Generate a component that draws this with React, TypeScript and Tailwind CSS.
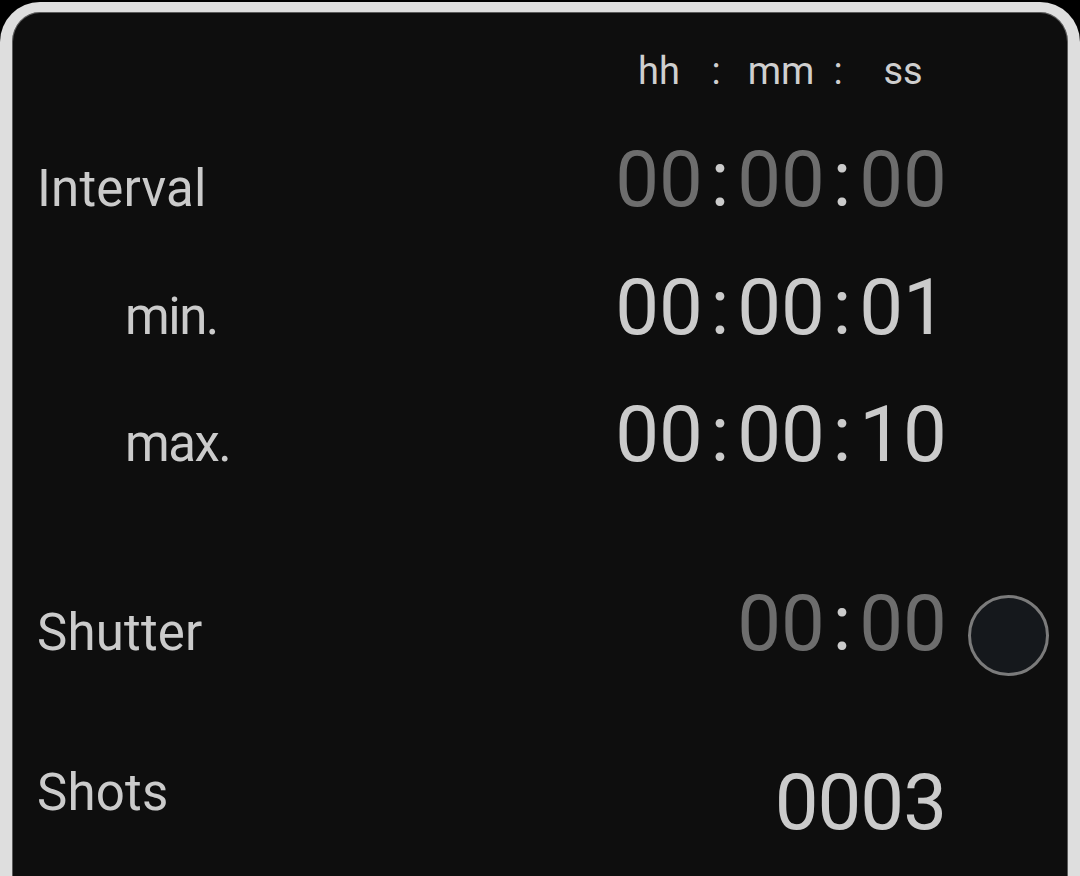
import { Fragment } from 'react';

const LABEL = 'text-[51px] text-[#cbcbcb]';
const BRIGHT = 'text-[#cbcbcb]';
const DIM = 'text-[#6d6d6d]';

function Clock({ parts, dim }: { parts: string[]; dim?: boolean }) {
  return (
    <div className="flex w-[332px] justify-end text-[78px] leading-[100px]">
      {parts.map((p, i) => (
        <Fragment key={i}>
          {i > 0 && <span className={`w-[34px] text-center ${BRIGHT}`}>:</span>}
          <span className={`w-[88px] text-center ${dim ? DIM : BRIGHT}`}>{p}</span>
        </Fragment>
      ))}
    </div>
  );
}

export default function App() {
  return (
    <div
      className="h-[876px] w-[1080px] overflow-hidden bg-black pt-[2px]"
      style={{ fontFamily: 'Roboto, "Open Sans", sans-serif' }}
    >
      <div className="h-[920px] rounded-t-[40px] border-x-[12px] border-t-[10px] border-[#dedede] bg-[#0e0e0e] shadow-[inset_0_0_0_1px_#5c5c5c]">
        {/* column header */}
        <div className="flex h-[118px] items-center">
          <div className="flex-1" />
          <div className="flex w-[332px] text-[38px] text-[#cfcfcf]">
            <span className="w-[88px] text-center">hh</span>
            <span className="w-[34px] pr-[8px] text-center">:</span>
            <span className="w-[88px] text-center">mm</span>
            <span className="w-[34px] pr-[8px] text-center">:</span>
            <span className="w-[88px] text-center">ss</span>
          </div>
          <div className="w-[121px]" />
        </div>

        <div className="flex h-[100px] items-baseline">
          <div className={`flex-1 pl-[25px] tracking-[0.2px] ${LABEL}`}>Interval</div>
          <Clock parts={['00', '00', '00']} dim />
          <div className="w-[121px]" />
        </div>

        <div className="mt-[28px] flex h-[100px] items-baseline">
          <div className={`flex-1 pl-[113px] tracking-[-1.5px] ${LABEL}`}>min.</div>
          <Clock parts={['00', '00', '01']} />
          <div className="w-[121px]" />
        </div>

        <div className="mt-[27px] flex h-[100px] items-baseline">
          <div className={`flex-1 pl-[113px] tracking-[-1.5px] ${LABEL}`}>max.</div>
          <Clock parts={['00', '00', '10']} />
          <div className="w-[121px]" />
        </div>

        <div className="mt-[89px] flex h-[100px] items-baseline">
          <div className={`flex-1 pl-[25px] tracking-[0.2px] ${LABEL}`}>Shutter</div>
          <Clock parts={['00', '00']} dim />
          <div className="w-[121px] self-start">
            <div className="ml-[21px] mt-[21px] h-[81px] w-[81px] rounded-full border-[3px] border-[#7b7b7b] bg-[#15181c]" />
          </div>
        </div>

        <div className="mt-[79px] flex h-[100px] items-center">
          <div className={`mb-[20px] flex-1 pl-[25px] tracking-[0.2px] ${LABEL}`}>Shots</div>
          <div className={`w-[332px] pr-[1px] text-right text-[78px] leading-[100px] tracking-[-1px] ${BRIGHT}`}>0003</div>
          <div className="w-[121px]" />
        </div>
      </div>
    </div>
  );
}
